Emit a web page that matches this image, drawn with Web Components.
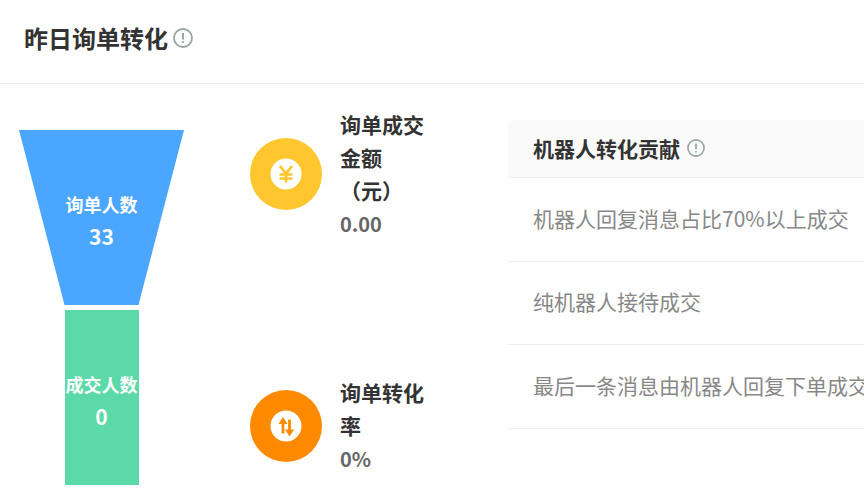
<!DOCTYPE html>
<html lang="zh">
<head>
<meta charset="utf-8">
<title>昨日询单转化</title>
<style>
	html, body {
		margin: 0;
		height: 100%;
		overflow: hidden;
		background: #fff;
		font-family: "Noto Sans CJK SC", "Noto Sans", sans-serif;
	}
</style>
</head>
<body>
<conversion-panel>
	<span slot="title">昨日询单转化</span>
	<funnel-stage slot="funnel" shape="top" color="#4ba6ff" label="询单人数" value="33"></funnel-stage>
	<funnel-stage slot="funnel" color="#5cd9a8" label="成交人数" value="0"></funnel-stage>
	<metric-card slot="metrics" color="#ffc62e" icon="yen" value="0.00">询单成交金额（元）</metric-card>
	<metric-card slot="metrics" color="#ff8a00" icon="swap" value="0%">询单转化率</metric-card>
	<contribution-table slot="table">
		<span slot="title">机器人转化贡献</span>
		<contribution-row>机器人回复消息占比70%以上成交</contribution-row>
		<contribution-row>纯机器人接待成交</contribution-row>
		<contribution-row>最后一条消息由机器人回复下单成交</contribution-row>
	</contribution-table>
</conversion-panel>

<script>
class InfoIcon extends HTMLElement {
	constructor() {
		super();
		let shadowRoot = this.attachShadow({mode: 'open'});
		shadowRoot.innerHTML = `
			<style>
				:host {
					display: inline-flex;
					width: 20px;
					height: 20px;
				}
				svg {
					width: 100%;
					height: 100%;
				}
			</style>
			<svg viewBox="0 0 20 20" fill="none" stroke="#9aa5a3">
				<circle cx="10" cy="10" r="9" stroke-width="1.8"></circle>
				<path d="M10 5v6.5" stroke-width="2"></path>
				<path d="M10 13.2v1.8" stroke-width="2"></path>
			</svg>
		`;
	}
}

class ConversionPanel extends HTMLElement {
	constructor() {
		super();
		let shadowRoot = this.attachShadow({mode: 'open'});
		shadowRoot.innerHTML = `
			<style>
				:host {
					display: block;
					width: 864px;
					height: 503px;
					overflow: hidden;
				}
				header {
					display: flex;
					align-items: center;
					gap: 5px;
					height: 75px;
					padding: 0 24px 8px;
					border-bottom: 1px solid #e8e8e8;
					color: #333;
					font-size: 24px;
					font-weight: 700;
				}
				.body {
					display: flex;
					align-items: flex-start;
				}
				.funnel {
					display: flex;
					flex-direction: column;
					gap: 5px;
					margin: 46px 0 0 19px;
					flex: none;
				}
				.metrics {
					display: flex;
					flex-direction: column;
					gap: 136px;
					margin: 24px 0 0 66px;
					width: 174px;
					flex: none;
				}
				.table {
					margin: 36px 0 0 84px;
					flex: none;
				}
			</style>
			<header><slot name="title"></slot><info-icon></info-icon></header>
			<div class="body">
				<div class="funnel"><slot name="funnel"></slot></div>
				<div class="metrics"><slot name="metrics"></slot></div>
				<div class="table"><slot name="table"></slot></div>
			</div>
		`;
	}
}

class FunnelStage extends HTMLElement {
	constructor() {
		super();
		let shadowRoot = this.attachShadow({mode: 'open'});
		shadowRoot.innerHTML = `
			<style>
				:host {
					display: flex;
					justify-content: center;
					width: 165px;
					height: 175px;
				}
				.shape {
					display: flex;
					flex-direction: column;
					align-items: center;
					justify-content: center;
					gap: 2px;
					box-sizing: border-box;
					width: 74px;
					height: 100%;
					padding-top: 5px;
					color: #fff;
					font-weight: 700;
					white-space: nowrap;
				}
				:host([shape="top"]) .shape {
					width: 100%;
					clip-path: polygon(0 0, 100% 0, 72.4% 100%, 27.6% 100%);
				}
				.label {
					font-size: 18px;
					line-height: 30px;
				}
				.value {
					font-size: 21px;
					line-height: 31px;
				}
			</style>
			<div class="shape"><span class="label"></span><span class="value"></span></div>
		`;
	}

	connectedCallback() {
		let shape = this.shadowRoot.querySelector('.shape');
		shape.style.backgroundColor = this.getAttribute('color');
		this.shadowRoot.querySelector('.label').textContent = this.getAttribute('label');
		this.shadowRoot.querySelector('.value').textContent = this.getAttribute('value');
	}
}

class MetricCard extends HTMLElement {
	static get icons() {
		return {
			yen: `
				<path d="M30 28l6 7.5 6-7.5M29.5 36.5h13M29.5 40.5h13M36 35.5V44.5" fill="none" stroke-width="2.7"></path>
			`,
			swap: `
				<path d="M33 32v11.5M39.5 29.5v11" fill="none" stroke-width="2.8"></path>
				<path d="M28.5 34l4.5-7 4.5 7zM35 39.5l4.5 7 4.5-7z" stroke="none"></path>
			`
		};
	}

	constructor() {
		super();
		let shadowRoot = this.attachShadow({mode: 'open'});
		shadowRoot.innerHTML = `
			<style>
				:host {
					display: flex;
					align-items: center;
					gap: 18px;
					font-size: 21px;
					line-height: 33px;
					font-weight: 700;
				}
				svg {
					width: 72px;
					height: 72px;
					flex: none;
				}
				.text {
					width: 84px;
				}
				.name {
					color: #333;
				}
				.value {
					color: #666;
					font-size: 20px;
				}
			</style>
			<svg viewBox="0 0 72 72"></svg>
			<div class="text">
				<div class="name"><slot></slot></div>
				<div class="value"></div>
			</div>
		`;
	}

	connectedCallback() {
		let color = this.getAttribute('color');
		let svg = this.shadowRoot.querySelector('svg');
		svg.setAttribute('fill', color);
		svg.setAttribute('stroke', color);
		svg.innerHTML = `
			<circle cx="36" cy="36" r="36" stroke="none"></circle>
			<circle cx="36" cy="36" r="15.5" fill="#fff" stroke="none"></circle>
			${MetricCard.icons[this.getAttribute('icon')]}
		`;
		this.shadowRoot.querySelector('.value').textContent = this.getAttribute('value');
	}
}

class ContributionTable extends HTMLElement {
	constructor() {
		super();
		let shadowRoot = this.attachShadow({mode: 'open'});
		shadowRoot.innerHTML = `
			<style>
				:host {
					display: block;
					width: 500px;
				}
				.head {
					display: flex;
					align-items: center;
					gap: 7px;
					height: 55px;
					padding: 0 25px 2px;
					background: #fafafa;
					border-bottom: 1px solid #eee;
					border-radius: 6px 6px 0 0;
					color: #333;
					font-size: 21px;
					font-weight: 700;
				}
				info-icon {
					width: 18px;
					height: 18px;
				}
			</style>
			<div class="head"><slot name="title"></slot><info-icon></info-icon></div>
			<slot></slot>
		`;
	}
}

class ContributionRow extends HTMLElement {
	constructor() {
		super();
		let shadowRoot = this.attachShadow({mode: 'open'});
		shadowRoot.innerHTML = `
			<style>
				:host {
					display: flex;
					align-items: center;
					height: 79.6px;
					padding: 0 25px 3px;
					border-bottom: 1px solid #eee;
					color: #888;
					font-size: 21px;
					white-space: nowrap;
				}
			</style>
			<slot></slot>
		`;
	}
}

customElements.define('info-icon', InfoIcon);
customElements.define('conversion-panel', ConversionPanel);
customElements.define('funnel-stage', FunnelStage);
customElements.define('metric-card', MetricCard);
customElements.define('contribution-table', ContributionTable);
customElements.define('contribution-row', ContributionRow);
</script>
</body>
</html>
